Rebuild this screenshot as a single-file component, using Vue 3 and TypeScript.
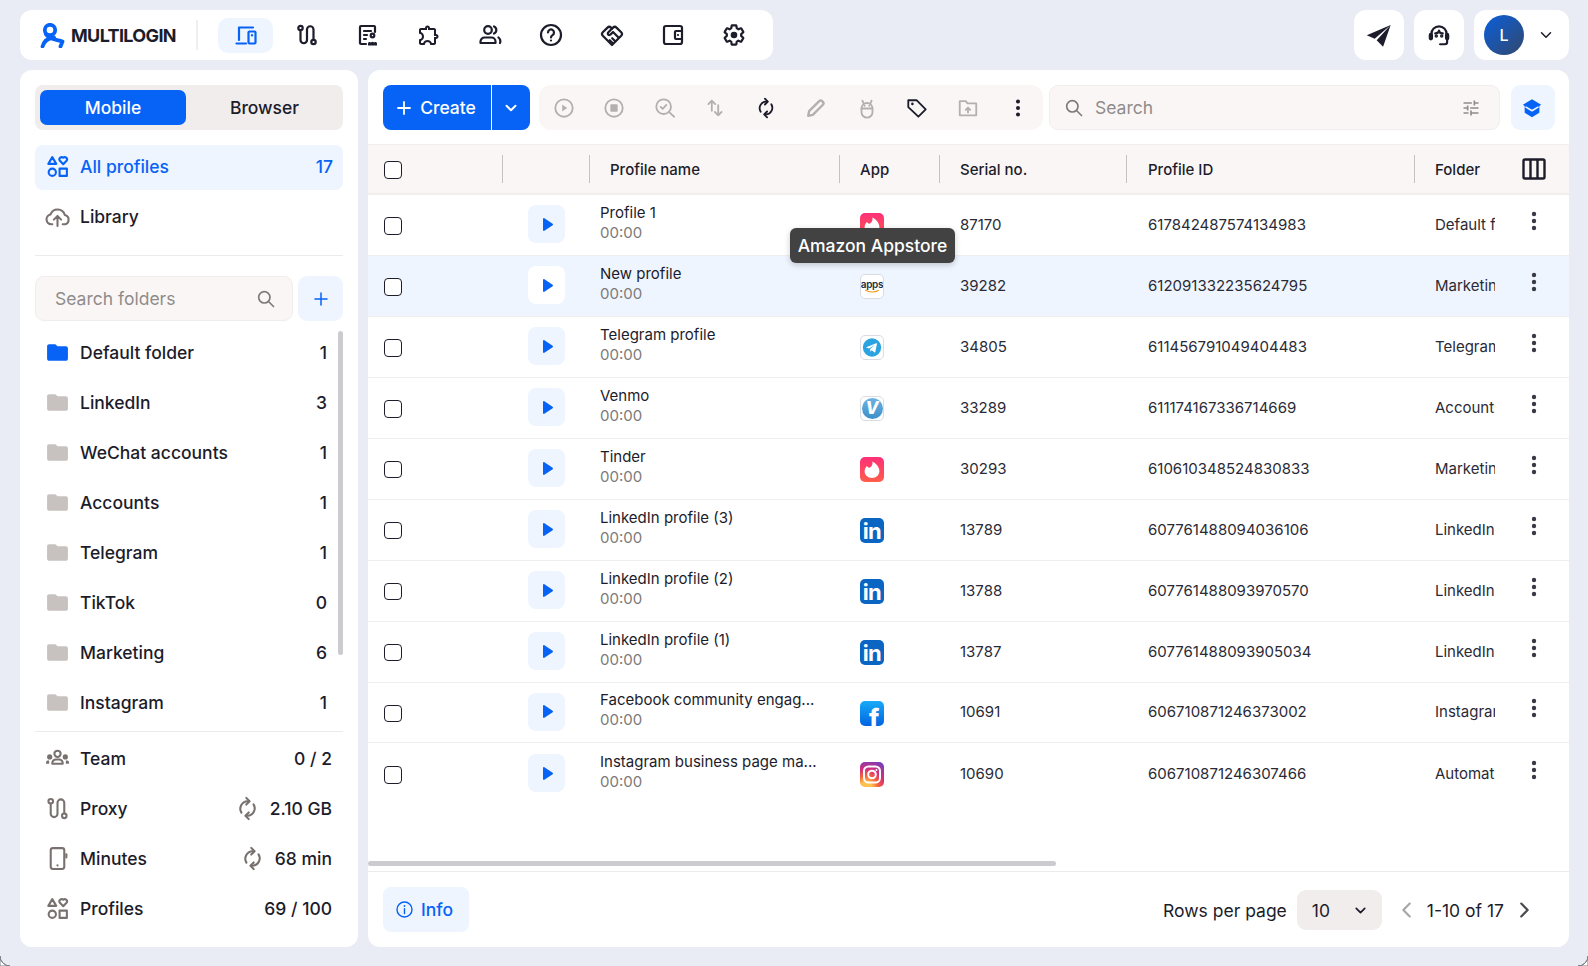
<template>
  <div class="app">
    <header class="topbar">
      <div class="nav-card">
        <div class="logo">
          <svg class="logo-mark" viewBox="0 0 25 25" aria-hidden="true">
            <circle cx="10" cy="7" r="5.200" />
            <path d="M6 11.500C9 16 15 16.500 22.500 18.500L20.500 23.500" />
            <path d="M14 14.500C8 15 4 18.500 2.500 23.500" />
          </svg>
          <span>MULTILOGIN</span>
        </div>
        <div class="logo-sep"></div>
        <nav class="nav">
          <button
            v-for="(name, i) in navIcons"
            :key="name"
            type="button"
            class="nav-btn"
            :class="{ active: i === 0 }"
          >
            <svg class="ic" viewBox="0 0 24 24" v-html="icons[name]"></svg>
          </button>
        </nav>
      </div>
      <div class="top-right">
        <button type="button" class="top-btn">
          <svg class="ic ic-28" viewBox="0 0 24 24" v-html="icons.plane"></svg>
        </button>
        <button type="button" class="top-btn">
          <svg class="ic ic-agent" viewBox="0 0 24 24" v-html="icons.agent"></svg>
        </button>
        <button type="button" class="top-btn account">
          <span class="avatar">L</span>
          <svg class="ic chev" viewBox="0 0 24 24" v-html="icons.chevDown"></svg>
        </button>
      </div>
    </header>

    <div class="panels">
      <aside class="side">
        <div class="seg">
          <button type="button" class="seg-btn on">Mobile</button>
          <button type="button" class="seg-btn">Browser</button>
        </div>

        <div class="side-links">
          <div class="side-row link selected">
            <svg class="ic side-ic" viewBox="0 0 24 24" v-html="icons.category"></svg>
            <span class="grow">All profiles</span>
            <span>17</span>
          </div>
          <div class="side-row link">
            <svg class="ic side-ic muted" viewBox="0 0 24 24" v-html="icons.cloud"></svg>
            <span class="grow">Library</span>
          </div>
        </div>

        <div class="rule rule-links"></div>

        <div class="folder-search">
          <label class="search-box">
            <input type="text" placeholder="Search folders" />
            <svg class="ic ic-search" viewBox="0 0 24 24" v-html="icons.search"></svg>
          </label>
          <button type="button" class="add-btn">
            <svg class="ic ic-plus" viewBox="0 0 24 24" v-html="icons.plus"></svg>
          </button>
        </div>

        <div class="folders">
          <div v-for="(f, i) in folders" :key="f.name" class="side-row folder">
            <svg class="side-ic folder-ic" :class="{ first: i === 0 }" viewBox="0 0 24 24">
              <path d="M10 4H4c-1.100 0-2 .9-2 2v12c0 1.100.9 2 2 2h16c1.100 0 2-.9 2-2V8c0-1.100-.9-2-2-2h-8z" />
            </svg>
            <span class="grow">{{ f.name }}</span>
            <span>{{ f.count }}</span>
          </div>
          <div class="folder-thumb"></div>
        </div>

        <div class="rule rule-folders"></div>

        <div v-for="s in stats" :key="s.label" class="side-row stat">
          <svg class="ic side-ic muted" viewBox="0 0 24 24" v-html="icons[s.icon]"></svg>
          <span class="grow">{{ s.label }}</span>
          <svg v-if="s.renews" class="ic ic-cycle" viewBox="0 0 24 24" v-html="icons.refresh"></svg>
          <span>{{ s.value }}</span>
        </div>
      </aside>

      <main class="main">
        <div class="toolbar">
          <div class="create">
            <button type="button" class="create-main">
              <svg class="ic ic-create" viewBox="0 0 24 24" v-html="icons.plus"></svg>
              Create
            </button>
            <button type="button" class="create-more">
              <svg class="ic ic-more" viewBox="0 0 24 24" v-html="icons.chevDown"></svg>
            </button>
          </div>
          <div class="actions">
            <button
              v-for="a in actions"
              :key="a.icon"
              type="button"
              class="action"
              :class="{ live: a.live }"
            >
              <svg class="ic" viewBox="0 0 24 24" v-html="icons[a.icon]"></svg>
            </button>
          </div>
          <label class="search-box profiles-search">
            <svg class="ic ic-search" viewBox="0 0 24 24" v-html="icons.search"></svg>
            <input type="text" placeholder="Search" />
            <svg class="ic ic-tune" viewBox="0 0 24 24" v-html="icons.tune"></svg>
          </label>
          <button type="button" class="learn">
            <svg class="ic ic-school" viewBox="0 0 24 24" v-html="icons.school"></svg>
          </button>
        </div>

        <div class="table">
          <div class="tr thead">
            <div class="cell"><input type="checkbox" class="cb" /></div>
            <div class="cell th"></div>
            <div class="cell th">Profile name</div>
            <div class="cell th">App</div>
            <div class="cell th">Serial no.</div>
            <div class="cell th th-id">Profile ID</div>
            <div class="cell th">
              <span class="grow">Folder</span>
              <svg class="ic ic-cols" viewBox="0 0 24 24">
                <rect x="1.500" y="2.500" width="21" height="19" rx="1.500" />
                <path d="M8.500 2.500v19M15.500 2.500v19" />
              </svg>
            </div>
          </div>

          <div
            v-for="(r, i) in rows"
            :key="r.id"
            class="tr row"
            :class="{ hovered: i === 1 }"
          >
            <div class="cell"><input type="checkbox" class="cb" /></div>
            <div class="cell">
              <button type="button" class="run">
                <svg viewBox="0 0 10 13" class="run-ic">
                  <path d="M0 1v11c0 .8.8 1.200 1.400.8l8.200-5.500c.5-.4.5-1.100 0-1.500L1.400.2C.8-.2 0 .2 0 1z" />
                </svg>
              </button>
            </div>
            <div class="cell name-cell">
              <div class="name">{{ r.name }}</div>
              <div class="time">00:00</div>
            </div>
            <div class="cell app-cell">
              <span class="app-ic" :class="`app-${r.app}`">
                <svg v-if="r.app === 'tinder'" viewBox="0 0 24 24" class="full">
                  <path fill="#fff" d="M9.600 10.200c2.200-1 3.400-3.300 2.800-6.200 3.700 1.700 7 5.600 7 9.600 0 4-3.200 6.900-7.400 6.900-4.200 0-7.400-2.900-7.400-6.700 0-2.400 1-4.100 2.500-5.600 0 .9.900 2 2.500 2z" />
                </svg>
                <template v-else-if="r.app === 'amazon'">
                  <span class="apps-word">apps</span>
                  <svg viewBox="0 0 24 6" class="apps-smile">
                    <path d="M3 1c5 3.500 13 3.500 18 .3" />
                  </svg>
                </template>
                <svg v-else-if="r.app === 'telegram'" viewBox="0 0 24 24" class="full">
                  <circle cx="12" cy="12" r="10" fill="#2aa3e0" />
                  <path fill="#fff" d="M5.800 11.700l10.700-4.300c.6-.2 1.100.2.900.9l-1.800 8.500c-.1.600-.6.800-1.100.4l-2.800-2.100-1.500 1.400-.2-2.900 5-4.500-6.200 3.900-2.900-.9c-.6-.1-.6-.5-.1-.4z" />
                </svg>
                <span v-else-if="r.app === 'venmo'" class="venmo-disc">V</span>
                <span v-else-if="r.app === 'linkedin'" class="in-word">in</span>
                <span v-else-if="r.app === 'facebook'" class="f-word">f</span>
                <svg v-else viewBox="0 0 24 24" class="full insta">
                  <rect x="4" y="4" width="16" height="16" rx="4.500" />
                  <circle cx="12" cy="12" r="3.800" />
                  <circle cx="16.500" cy="7.500" r="1" fill="#fff" stroke="none" />
                </svg>
              </span>
            </div>
            <div class="cell text-cell">{{ r.serial }}</div>
            <div class="cell text-cell">{{ r.id }}</div>
            <div class="cell text-cell folder-cell">
              <span class="folder-name">{{ r.folder }}</span>
              <svg class="ic row-menu" viewBox="0 0 24 24" v-html="icons.kebab"></svg>
            </div>
          </div>

          <div class="h-thumb"></div>
        </div>

        <footer class="foot">
          <button type="button" class="info">
            <svg class="ic ic-info" viewBox="0 0 24 24">
              <circle cx="12" cy="12" r="9.500" />
              <path d="M12 11v6" />
              <circle cx="12" cy="7.500" r="1.200" fill="currentColor" stroke="none" />
            </svg>
            Info
          </button>
          <div class="pager">
            <span>Rows per page</span>
            <div class="page-size">
              <span>10</span>
              <svg class="ic ic-size" viewBox="0 0 24 24" v-html="icons.chevDown"></svg>
            </div>
            <svg class="ic ic-page faded" viewBox="0 0 24 24"><path d="M15 5l-7 7 7 7" /></svg>
            <span>1-10 of 17</span>
            <svg class="ic ic-page" viewBox="0 0 24 24"><path d="M9 5l7 7-7 7" /></svg>
          </div>
        </footer>

        <div class="tooltip">Amazon Appstore</div>
      </main>
    </div>

    <svg class="corner corner-l" viewBox="0 0 10 10"><path d="M0 0a10 10 0 0 0 10 10H0z" fill="#fff" /><path d="M0 0a10 10 0 0 0 10 10" /></svg>
    <svg class="corner corner-r" viewBox="0 0 10 10"><path d="M10 0a10 10 0 0 1-10 10h10z" fill="#fff" /><path d="M10 0a10 10 0 0 1-10 10" /></svg>
  </div>
</template>

<script setup lang="ts">
type AppKind = 'tinder' | 'amazon' | 'telegram' | 'venmo' | 'linkedin' | 'facebook' | 'instagram'

const icons: Record<string, string> = {
  devices:
    '<path d="M19 4.500H5V17"/><path d="M2.500 20.500H12"/><rect x="14.500" y="8.500" width="7" height="12" rx="1"/><path d="M18 12v.5"/>',
  route:
    '<circle cx="5.500" cy="5" r="2.200"/><path d="M5.500 7.200V17a3.250 3.250 0 0 0 6.500 0V6.500a3.250 3.250 0 0 1 6.500 0v10.300"/><circle cx="18.500" cy="19" r="2.200"/>',
  report:
    '<path d="M19 9V4a1 1 0 0 0-1-1H5a1 1 0 0 0-1 1v16a1 1 0 0 0 1 1h5"/><path d="M8 8h7M8 12h3M8 16h2"/><circle cx="16.500" cy="12.500" r="1.800"/><path fill="currentColor" stroke="none" d="M12 22.500v-1.800a1.700 1.700 0 0 1 3-1.100 1.800 1.800 0 0 1 3 0 1.700 1.700 0 0 1 3 1.100v1.800z"/>',
  puzzle:
    '<path fill="currentColor" stroke="none" d="M10.500 4.500c.28 0 .5.22.5.5v2h6v6h2c.28 0 .5.22.5.5s-.22.5-.5.5h-2v6h-2.120c-.68-1.750-2.390-3-4.380-3s-3.700 1.250-4.380 3H4v-2.120c1.750-.68 3-2.390 3-4.380 0-1.990-1.240-3.700-2.990-4.380L4 7h6V5c0-.28.22-.5.500-.5m0-2C9.120 2.500 8 3.620 8 5H4c-1.100 0-1.990.9-1.990 2v3.800h.29c1.490 0 2.700 1.210 2.700 2.700s-1.210 2.700-2.700 2.700H2V20c0 1.100.9 2 2 2h3.800v-.3c0-1.490 1.210-2.700 2.700-2.700s2.700 1.210 2.700 2.700v.3H17c1.100 0 2-.9 2-2v-4c1.380 0 2.500-1.120 2.500-2.500S20.380 11 19 11V7c0-1.100-.9-2-2-2h-4c0-1.380-1.120-2.500-2.500-2.500z"/>',
  people:
    '<circle cx="10" cy="7" r="3.800"/><path d="M2.500 20v-1.500a4 4 0 0 1 4-4h7a4 4 0 0 1 4 4V20z"/><path d="M16 3.500a3.800 3.800 0 0 1 0 7"/><path d="M20.500 14.500a5 5 0 0 1 1.500 5.500"/>',
  help:
    '<circle cx="12" cy="12" r="10"/><path d="M9 9.500a3 3 0 1 1 4.500 2.600c-1 .6-1.500 1.200-1.500 2.400"/><circle cx="12" cy="17.500" r="1.100" fill="currentColor" stroke="none"/>',
  handshake:
    '<path d="M12 22l-9.200-9.200a2.500 2.500 0 0 1 0-3.500L7.500 4.600a2.500 2.500 0 0 1 3.500 0l1 1 1-1a2.500 2.500 0 0 1 3.500 0l4.700 4.700a2.500 2.500 0 0 1 0 3.500z"/><path d="M12 5.600L8.200 9.500a1.500 1.500 0 0 0 2.200 2.100L13 9l5.500 5.500"/><path d="M15 18l-2.800-2.800M12.500 20l-2.800-2.800"/>',
  wallet:
    '<rect x="3" y="3" width="18" height="18" rx="2"/><path d="M21 8h-6a1 1 0 0 0-1 1v6a1 1 0 0 0 1 1h6"/><circle cx="17" cy="12" r="1.100" fill="currentColor" stroke="none"/>',
  gear:
    '<path d="M19.140 12.940c.04-.3.06-.61.06-.94 0-.32-.02-.64-.07-.94l2.030-1.580a.49.49 0 0 0 .12-.61l-1.920-3.320a.488.488 0 0 0-.59-.22l-2.390.96c-.5-.38-1.030-.7-1.620-.94l-.36-2.540a.484.484 0 0 0-.48-.41h-3.840c-.24 0-.43.17-.47.41l-.36 2.540c-.59.24-1.130.57-1.620.94l-2.390-.96c-.22-.08-.47 0-.59.22L2.740 8.870c-.12.21-.08.47.12.61l2.030 1.580c-.05.3-.09.63-.09.94s.02.64.07.94l-2.030 1.580a.49.49 0 0 0-.12.61l1.920 3.320c.12.22.37.29.59.22l2.390-.96c.5.38 1.030.7 1.620.94l.36 2.540c.05.24.24.41.48.41h3.840c.24 0 .44-.17.47-.41l.36-2.540c.59-.24 1.130-.56 1.620-.94l2.390.96c.22.08.47 0 .59-.22l1.920-3.320c.12-.22.07-.47-.12-.61z"/><circle cx="12" cy="12" r="3.300" fill="currentColor" stroke="none"/>',
  plane:
    '<path fill="currentColor" stroke="none" d="M22 3.500L1.500 12.200 8.300 15.200 22 3.500zM22 3.500L10 16.500 15.500 22 22 3.500z"/>',
  agent:
    '<path d="M5 15v-4a7 7 0 0 1 14 0v4"/><path d="M8.500 10.500c2.200 0 3.300-1 3.500-2.500.4 1.600 1.500 2.500 3.500 2.500"/><rect x="3.500" y="11" width="2" height="5" rx="1" fill="currentColor"/><rect x="18.500" y="11" width="2" height="5" rx="1" fill="currentColor"/><path d="M19.500 16v2.500a2 2 0 0 1-2 2H13"/><circle cx="9.500" cy="13" r=".6" fill="currentColor"/><circle cx="14.500" cy="13" r=".6" fill="currentColor"/>',
  chevDown: '<path d="M6 9l6 6 6-6"/>',
  plus: '<path d="M12 4v16M4 12h16"/>',
  search: '<circle cx="10" cy="10" r="6.800"/><path d="M15 15l6 6"/>',
  tune:
    '<path fill="currentColor" stroke="none" d="M3 17v2h6v-2H3zM3 5v2h10V5H3zm10 16v-2h8v-2h-8v-2h-2v6h2zM7 9v2H3v2h4v2h2V9H7zm14 4v-2H11v2h10zm-6-4h2V7h4V5h-4V3h-2v6z"/>',
  school:
    '<path fill="currentColor" stroke="none" d="M12 2.500l10 6-2 1.300v7.400L12 22l-8-4.800V9.800l-2-1.300z"/><path d="M5.500 11l6.500 4 6.500-4" stroke="#eef5ff" stroke-width="1.800"/>',
  category:
    '<path d="M7 3l3.800 6.500H3.200z"/><path d="M17.500 9.800l-3.400-3.500a2.200 2.200 0 0 1 3.400-2.700 2.200 2.200 0 0 1 3.400 2.700z"/><circle cx="7" cy="17.500" r="3.500"/><rect x="14" y="14" width="7" height="7"/>',
  cloud:
    '<path d="M7 19.500H6a4.800 4.800 0 0 1-.7-9.500A7.200 7.200 0 0 1 19 10.500a4.600 4.600 0 0 1 0 9h-2"/><path d="M12 21v-9M8.500 15l3.500-3.500 3.500 3.500"/>',
  team:
    '<circle cx="12" cy="7.500" r="3"/><path d="M7 17v-.5a3.500 3.500 0 0 1 3.500-3.500h3a3.500 3.500 0 0 1 3.500 3.500v.5z"/><circle cx="4.500" cy="10.500" r="1.500" fill="currentColor"/><circle cx="19.500" cy="10.500" r="1.500" fill="currentColor"/><path d="M1 17v-1.500A1.500 1.500 0 0 1 2.500 14H4v3zM23 17v-1.500a1.500 1.500 0 0 0-1.500-1.500H20v3z" fill="currentColor" stroke="none"/>',
  phone:
    '<rect x="5.500" y="2" width="13" height="20" rx="2"/><path d="M12 18.500v.1"/><path d="M20.500 8v3"/>',
  refresh:
    '<path d="M6.200 16A7.200 7.200 0 0 1 12 5h1.500"/><path d="M10.800 1.800L14 5l-3.200 3.200"/><path d="M17.800 8A7.200 7.200 0 0 1 12 19h-1.500"/><path d="M13.200 22.200L10 19l3.200-3.200"/>',
  play: '<circle cx="12" cy="12" r="9.500"/><path d="M10 8.300l5.500 3.700-5.500 3.700z" fill="currentColor" stroke="none"/>',
  stop: '<circle cx="12" cy="12" r="9.500"/><rect x="8" y="8" width="8" height="8" rx="1" fill="currentColor" stroke="none"/>',
  scan: '<circle cx="10.500" cy="10.500" r="8"/><path d="M7.200 10.800l2.300 2.200 4-4.300"/><path d="M16.500 16.500l5.500 5"/>',
  swap: '<path d="M8.500 15V4M4.800 7.800L8.500 4l3.700 3.800"/><path d="M15.500 9v11M11.800 16.200l3.700 3.800 3.700-3.800"/>',
  pencil:
    '<path stroke-width="2.600" d="M3.500 20.500l1-5L15.500 4.500a2.300 2.300 0 0 1 3.200 0l.8.8a2.300 2.300 0 0 1 0 3.200L8.500 19.500z"/>',
  android:
    '<rect x="6" y="6.500" width="12" height="16" rx="6"/><path d="M6 12.500h12M8 6.500L7 4M16 6.500L17 4"/><path d="M9.500 9.500v.1M14.500 9.500v.1"/>',
  tag:
    '<path d="M2.500 3.500h9l10 10-8 8-11-10.500z"/><circle cx="7" cy="7.500" r="1.400" fill="currentColor" stroke="none"/>',
  folderUp:
    '<path d="M3 4.500h6.500l2 2.500H21v13H3z"/><path d="M12 17v-5M9.500 14l2.500-2.500 2.500 2.500"/>',
  kebab:
    '<circle cx="12" cy="5" r="2.200" fill="currentColor" stroke="none"/><circle cx="12" cy="12" r="2.200" fill="currentColor" stroke="none"/><circle cx="12" cy="19" r="2.200" fill="currentColor" stroke="none"/>',
}

const navIcons = ['devices', 'route', 'report', 'puzzle', 'people', 'help', 'handshake', 'wallet', 'gear']

const folders = [
  { name: 'Default folder', count: 1 },
  { name: 'LinkedIn', count: 3 },
  { name: 'WeChat accounts', count: 1 },
  { name: 'Accounts', count: 1 },
  { name: 'Telegram', count: 1 },
  { name: 'TikTok', count: 0 },
  { name: 'Marketing', count: 6 },
  { name: 'Instagram', count: 1 },
]

const stats = [
  { label: 'Team', value: '0 / 2', icon: 'team', renews: false },
  { label: 'Proxy', value: '2.10 GB', icon: 'route', renews: true },
  { label: 'Minutes', value: '68 min', icon: 'phone', renews: true },
  { label: 'Profiles', value: '69 / 100', icon: 'category', renews: false },
]

const actions = [
  { icon: 'play', live: false },
  { icon: 'stop', live: false },
  { icon: 'scan', live: false },
  { icon: 'swap', live: false },
  { icon: 'refresh', live: true },
  { icon: 'pencil', live: false },
  { icon: 'android', live: false },
  { icon: 'tag', live: true },
  { icon: 'folderUp', live: false },
  { icon: 'kebab', live: true },
]

const rows: { name: string; app: AppKind; serial: string; id: string; folder: string }[] = [
  { name: 'Profile 1', app: 'tinder', serial: '87170', id: '617842487574134983', folder: 'Default folder' },
  { name: 'New profile', app: 'amazon', serial: '39282', id: '612091332235624795', folder: 'Marketing' },
  { name: 'Telegram profile', app: 'telegram', serial: '34805', id: '611456791049404483', folder: 'Telegram' },
  { name: 'Venmo', app: 'venmo', serial: '33289', id: '611174167336714669', folder: 'Accounts' },
  { name: 'Tinder', app: 'tinder', serial: '30293', id: '610610348524830833', folder: 'Marketing' },
  { name: 'LinkedIn profile (3)', app: 'linkedin', serial: '13789', id: '607761488094036106', folder: 'LinkedIn' },
  { name: 'LinkedIn profile (2)', app: 'linkedin', serial: '13788', id: '607761488093970570', folder: 'LinkedIn' },
  { name: 'LinkedIn profile (1)', app: 'linkedin', serial: '13787', id: '607761488093905034', folder: 'LinkedIn' },
  { name: 'Facebook community engag...', app: 'facebook', serial: '10691', id: '606710871246373002', folder: 'Instagram' },
  { name: 'Instagram business page ma...', app: 'instagram', serial: '10690', id: '606710871246307466', folder: 'Automation' },
]
</script>

<style>
html,
body {
  margin: 0;
  background: #e9ecf4;
}
</style>

<style scoped>
.app {
  position: relative;
  box-sizing: border-box;
  width: 1588px;
  height: 966px;
  overflow: hidden;
  padding: 10px 19px 19px 20px;
  display: flex;
  flex-direction: column;
  gap: 10px;
  background: #e9ecf4;
  color: #1c1c2b;
  font-family: Inter, "Liberation Sans", sans-serif;
  font-size: 17.500px;
}

button {
  appearance: none;
  border: 0;
  padding: 0;
  margin: 0;
  background: none;
  color: inherit;
  font: inherit;
  display: inline-flex;
  align-items: center;
  justify-content: center;
}

.ic {
  width: 24px;
  height: 24px;
  flex: none;
  fill: none;
  stroke: currentColor;
  stroke-width: 2;
  stroke-linecap: round;
  stroke-linejoin: round;
}

.grow {
  flex: 1;
  min-width: 0;
}

/* top bar */
.topbar {
  height: 50px;
  display: flex;
  justify-content: space-between;
  flex: none;
}

.nav-card {
  width: 753px;
  display: flex;
  align-items: center;
  background: #fff;
  border-radius: 12px;
}

.logo {
  display: flex;
  align-items: center;
  gap: 6px;
  margin-left: 20px;
  width: 156px;
  font-size: 18px;
  font-weight: 700;
  letter-spacing: -0.65px;
}

.logo-mark {
  width: 25px;
  height: 25px;
  flex: none;
  fill: none;
  stroke: #0663f6;
  stroke-width: 3.800;
  stroke-linecap: round;
  stroke-linejoin: round;
}

.logo-sep {
  width: 2px;
  height: 30px;
  background: #f1efee;
  margin-right: 20px;
}

.nav {
  display: flex;
  gap: 6.100px;
}

.nav-btn {
  width: 55px;
  height: 35px;
  border-radius: 10px;
}

.nav-btn .ic {
  stroke-width: 2.200;
}

.nav-btn.active {
  background: #eef5ff;
  color: #0663f6;
}

.top-right {
  display: flex;
  gap: 10px;
}

.top-btn {
  width: 50px;
  height: 50px;
  background: #fff;
  border-radius: 12px;
}

.ic-28 {
  width: 28px;
  height: 28px;
}

.ic-agent {
  width: 26px;
  height: 26px;
}

.account {
  width: 95px;
  justify-content: flex-start;
  padding-left: 10px;
  box-sizing: border-box;
}

.avatar {
  width: 40px;
  height: 40px;
  border-radius: 50%;
  background: linear-gradient(135deg, #0a5fdc, #33486c);
  color: #fff;
  font-size: 16px;
  font-weight: 500;
  display: flex;
  align-items: center;
  justify-content: center;
}

.chev {
  width: 18px;
  height: 18px;
  margin-left: 13px;
}

/* panels */
.panels {
  flex: 1;
  min-height: 0;
  display: grid;
  grid-template-columns: 338px 1fr;
  grid-template-rows: minmax(0, 1fr);
  gap: 10px;
}

.side {
  box-sizing: border-box;
  background: #fff;
  border-radius: 12px;
  padding: 15px 15px 0;
}

.seg {
  height: 45px;
  box-sizing: border-box;
  padding: 5px 0 5px 5px;
  display: flex;
  background: #f1edec;
  border-radius: 8px;
}

.seg-btn {
  flex: 1;
  font-weight: 500;
  border-radius: 7px;
}

.seg-btn.on {
  flex: none;
  width: 146px;
  background: #0663f6;
  color: #fff;
}

.side-links {
  margin-top: 15px;
  display: flex;
  flex-direction: column;
  gap: 5px;
}

.side-row {
  height: 45px;
  box-sizing: border-box;
  display: flex;
  align-items: center;
  padding: 0 16px 0 10px;
  border-radius: 8px;
  font-weight: 450;
}

.side-row.link {
  padding-bottom: 2px;
}

.side-row.selected {
  padding-right: 10px;
  background: #eef5ff;
  color: #0663f6;
}

.side-ic {
  width: 25px;
  height: 25px;
  margin-right: 10px;
}

.muted {
  color: #79716f;
}

.rule {
  height: 1px;
  background: #eceaea;
}

.rule-links {
  margin-top: 15px;
}

.folder-search {
  margin-top: 20px;
  display: flex;
  gap: 5px;
}

.search-box {
  flex: 1;
  min-width: 0;
  height: 45px;
  box-sizing: border-box;
  display: flex;
  align-items: center;
  background: #faf6f5;
  border: 1px solid #f1edec;
  border-radius: 9px;
  padding: 0 16px 0 19px;
  color: #7d7a79;
}

.search-box input {
  flex: 1;
  min-width: 0;
  border: 0;
  outline: 0;
  padding: 0;
  background: none;
  font: inherit;
  color: inherit;
}

.search-box input::placeholder {
  color: #8f8c8b;
  opacity: 1;
}

.ic-search {
  width: 20px;
  height: 20px;
}

.add-btn {
  width: 45px;
  height: 45px;
  flex: none;
  background: #eef5ff;
  border-radius: 9px;
  color: #0663f6;
}

.ic-plus {
  width: 18px;
  height: 18px;
}

.folders {
  position: relative;
  margin-top: 6px;
}

.folder {
  height: 50px;
}

.folder-ic {
  fill: #c7c2c0;
}

.folder-ic.first {
  fill: #0663f6;
}

.folder-thumb {
  position: absolute;
  right: 0;
  top: 4px;
  width: 5px;
  height: 324px;
  border-radius: 3px;
  background: #cbcbd0;
}

.rule-folders {
  margin: 4px 0 1px;
}

.stat {
  height: 50px;
  padding-right: 11px;
}

.ic-cycle {
  width: 25px;
  height: 25px;
  color: #79716f;
  margin-right: 10px;
}

/* main */
.main {
  position: relative;
  background: #fff;
  border-radius: 12px;
  display: flex;
  flex-direction: column;
  min-width: 0;
  overflow: hidden;
}

.toolbar {
  flex: none;
  display: flex;
  gap: 7px;
  padding: 15px 16px 14px 15px;
}

.create {
  display: flex;
  height: 45px;
  width: 147px;
  flex: none;
  background: #0663f6;
  color: #fff;
  border-radius: 8px;
  margin-right: 2px;
}

.create-main {
  width: 109px;
  box-sizing: border-box;
  gap: 7px;
  padding-right: 3px;
  font-weight: 500;
  border-right: 1px solid #fff;
}

.ic-create {
  width: 18px;
  height: 18px;
  stroke-width: 2.400;
}

.create-more {
  flex: 1;
}

.ic-more {
  width: 18px;
  height: 18px;
  stroke-width: 2.600;
}

.actions {
  width: 504px;
  height: 45px;
  flex: none;
  box-sizing: border-box;
  padding: 0 5px;
  display: flex;
  justify-content: space-between;
  background: #faf6f5;
  border-radius: 12px;
  color: #b4b0ae;
}

.action {
  width: 40px;
}

.action .ic {
  width: 22px;
  height: 22px;
}

.action.live {
  color: #1c1c2b;
}

.profiles-search {
  width: 451px;
  flex: none;
  margin-left: -1px;
  padding: 0 18px 0 14px;
}

.profiles-search input {
  margin-left: 11px;
}

.ic-tune {
  width: 20px;
  height: 20px;
  color: #8f8c8b;
}

.learn {
  width: 44px;
  height: 45px;
  flex: none;
  margin-left: 4px;
  background: #eef5ff;
  border-radius: 9px;
  color: #0663f6;
}

.ic-school {
  width: 22px;
  height: 22px;
  margin-right: 2px;
}

.table {
  position: relative;
  flex: 1;
  min-height: 0;
  font-size: 15px;
}

.tr {
  display: grid;
  grid-template-columns: 134px 87px 250px 100px 187px 288px 155px;
  box-sizing: border-box;
}

.thead {
  height: 51px;
  background: #faf6f5;
  border-top: 1px solid #f1efee;
  border-bottom: 2px solid #f1efee;
  font-weight: 450;
}

.row {
  height: 60.950px;
  border-bottom: 1px solid #f0eeee;
}

.row:nth-last-child(2) {
  border-bottom: 0;
}

.row.hovered {
  background: #eef5ff;
}

.cell {
  display: flex;
  align-items: center;
  min-width: 0;
}

.cb {
  appearance: none;
  box-sizing: border-box;
  width: 17.500px;
  height: 17.500px;
  margin: 2px 0 0 16px;
  border: 1.500px solid #1c1c2b;
  border-radius: 4px;
  background: #fff;
}

.th {
  position: relative;
  padding-left: 21px;
}

.th-id {
  padding-left: 22px;
}

.th::before {
  content: "";
  position: absolute;
  left: 0;
  top: 10px;
  bottom: 10px;
  width: 1px;
  background: #c6c2c0;
}

.ic-cols {
  width: 26px;
  height: 24px;
  stroke-width: 2.400;
  stroke-linecap: butt;
  margin-right: 22px;
}

.run {
  width: 37px;
  height: 38px;
  margin: -1px 0 0 26px;
  border-radius: 8px;
  background: #eef5ff;
}

.hovered .run {
  background: #fff;
}

.run-ic {
  width: 10px;
  height: 13px;
  margin-left: 2px;
  fill: #0663f6;
}

.name-cell {
  flex-direction: column;
  align-items: flex-start;
  justify-content: center;
  padding: 0 0 4px 11px;
  line-height: 20px;
}

.time {
  color: #7c7a79;
}

.app-cell {
  padding-left: 21px;
  padding-top: 2px;
}

.app-ic {
  position: relative;
  box-sizing: border-box;
  width: 24px;
  height: 25px;
  border-radius: 5px;
  overflow: hidden;
  display: flex;
  flex-direction: column;
  align-items: center;
  justify-content: center;
  border: 1px solid #d9dce2;
  background: #fff;
}

.full {
  width: 100%;
  height: 100%;
  display: block;
}

.app-tinder {
  border: 0;
  background: linear-gradient(#fd2f78, #ff5d4a);
}

.apps-word {
  font-size: 10px;
  line-height: 10px;
  font-weight: 600;
  letter-spacing: -0.3px;
  color: #232f3e;
}

.apps-smile {
  width: 18px;
  height: 5px;
  fill: none;
  stroke: #f39a1f;
  stroke-width: 1.600;
}

.venmo-disc {
  width: 21px;
  height: 21px;
  border-radius: 50%;
  background: linear-gradient(#6cb3e4, #3d8fc9);
  color: #fff;
  font-size: 17px;
  font-style: italic;
  font-weight: 800;
  line-height: 21px;
  text-align: center;
}

.app-linkedin {
  border: 0;
  background: #0a66c2;
}

.in-word {
  color: #fff;
  font-size: 22px;
  font-weight: 700;
  letter-spacing: -0.5px;
  line-height: 24px;
}

.app-facebook {
  border: 0;
  background: linear-gradient(#18aaf8, #0264e1);
  justify-content: flex-end;
}

.f-word {
  margin: 0 0 -5px 4px;
  color: #fff;
  font-size: 25px;
  font-weight: 800;
  line-height: 25px;
}

.app-instagram {
  border: 0;
  background: radial-gradient(circle at 25% 105%, #fdc04f 0 20%, #f5663a 38%, #d62e7a 60%, #7a3db8 90%);
}

.insta {
  fill: none;
  stroke: #fff;
  stroke-width: 2;
}

.text-cell {
  padding-left: 21px;
  padding-bottom: 1px;
  color: #2a2a36;
}

.text-cell + .text-cell {
  padding-left: 22px;
}

.text-cell + .text-cell + .text-cell {
  padding-left: 21px;
}

.folder-name {
  width: 60px;
  flex: none;
  overflow: hidden;
  white-space: nowrap;
}

.row-menu {
  margin: -7px 0 0 27px;
  color: #3a3a46;
}

.h-thumb {
  position: absolute;
  left: 0;
  bottom: 5px;
  width: 688px;
  height: 5px;
  border-radius: 3px;
  background: #cbcbd0;
}

.foot {
  flex: none;
  height: 76px;
  box-sizing: border-box;
  border-top: 1px solid #eceaea;
  padding: 0 29px 0 15px;
  display: flex;
  align-items: center;
  justify-content: space-between;
}

.info {
  width: 86px;
  height: 45px;
  gap: 7px;
  padding-right: 4px;
  box-sizing: border-box;
  background: #eef5ff;
  border-radius: 8px;
  color: #0663f6;
  font-weight: 500;
}

.ic-info {
  width: 19px;
  height: 19px;
  stroke-width: 1.800;
}

.pager {
  display: flex;
  align-items: center;
  margin-top: 1px;
}

.page-size {
  width: 85px;
  height: 40px;
  box-sizing: border-box;
  margin: 0 11px 0 10px;
  padding: 0 13px 0 15px;
  display: flex;
  align-items: center;
  justify-content: space-between;
  background: #f1edec;
  border-radius: 9px;
}

.ic-size {
  width: 17px;
  height: 17px;
  stroke-width: 2.400;
}

.ic-page {
  width: 22px;
  height: 22px;
  color: #4a4a50;
  stroke-width: 2.400;
  margin: 0 5px 0 9px;
}

.ic-page.faded {
  color: #a9a7a6;
  margin: 0 9px 0 3px;
}

.tooltip {
  position: absolute;
  left: 422px;
  top: 158px;
  width: 165px;
  height: 35px;
  display: flex;
  align-items: center;
  justify-content: center;
  background: #424242;
  color: #fff;
  border-radius: 6px;
  font-weight: 500;
  white-space: nowrap;
  box-shadow: 0 2px 6px rgba(0, 0, 0, 0.2);
}

.corner {
  position: absolute;
  bottom: 0;
  width: 10px;
  height: 10px;
  fill: none;
  stroke: #7f8087;
  stroke-width: 1;
}

.corner-l {
  left: 0;
}

.corner-r {
  right: 0;
}
</style>
